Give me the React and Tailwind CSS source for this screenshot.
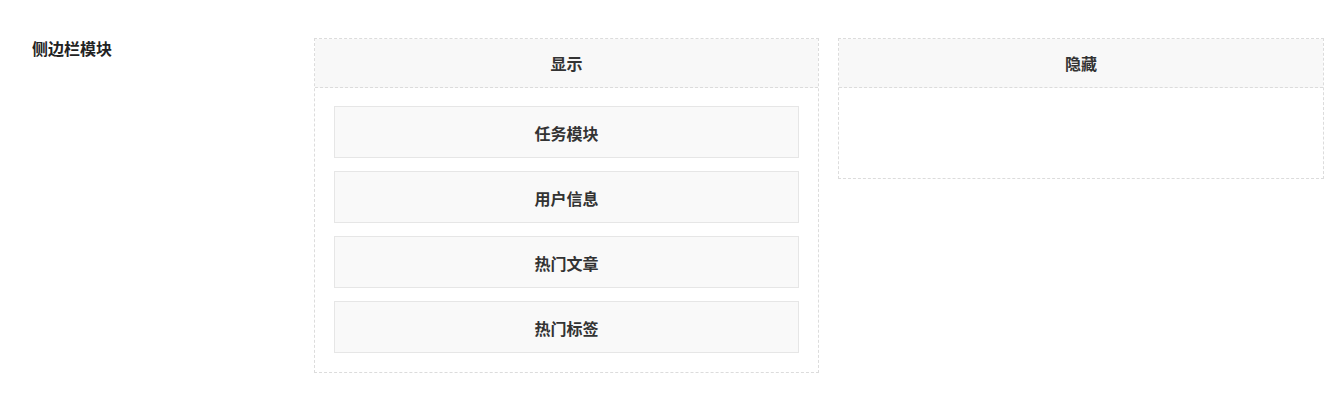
export default function App() {
  const items = ["任务模块", "用户信息", "热门文章", "热门标签"];
  return (
    <div
      className="w-[1340px] h-[407px] bg-white text-[#333]"
      style={{ fontFamily: '"Noto Sans CJK SC", "Noto Sans", sans-serif' }}
    >
      <div className="flex pt-[38px]">
        <div className="w-[314px] pl-[32px] text-[16px] font-bold leading-[20px] text-[#222]">
          侧边栏模块
        </div>
        <div className="w-[505px] border border-dashed border-[#dcdcdc]">
          <div className="h-[49px] bg-[#f8f8f8] border-b border-dashed border-[#dcdcdc] flex items-center justify-center text-[16px] font-bold">
            显示
          </div>
          <div className="pt-[18px] px-[19px] pb-[19px] flex flex-col gap-[13px]">
            {items.map((t) => (
              <div
                key={t}
                className="h-[52px] pt-[1px] bg-[#f9f9f9] border border-[#e6e6e6] flex items-center justify-center text-[16px] font-bold"
              >
                {t}
              </div>
            ))}
          </div>
        </div>
        <div className="ml-[19px] w-[486px] h-[141px] border border-dashed border-[#dcdcdc]">
          <div className="h-[49px] bg-[#f8f8f8] border-b border-dashed border-[#dcdcdc] flex items-center justify-center text-[16px] font-bold">
            隐藏
          </div>
        </div>
      </div>
    </div>
  );
}
